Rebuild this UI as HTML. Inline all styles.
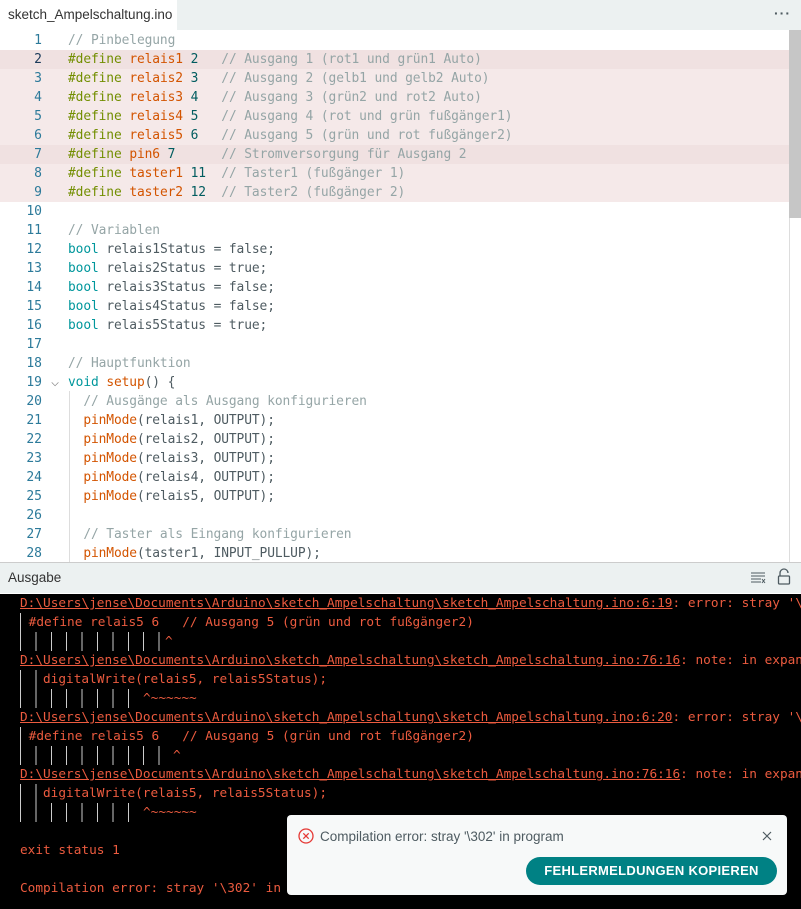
<!DOCTYPE html>
<html><head><meta charset="utf-8"><style>
*{margin:0;padding:0;box-sizing:border-box}
body{width:801px;height:909px;overflow:hidden;background:#fff;font-family:"Liberation Sans",sans-serif;position:relative}
.tabbar{position:absolute;left:0;top:0;width:801px;height:30px;background:#ecf1f1}
.tab{position:absolute;left:0;top:0;width:177px;height:30px;background:#fff;font-size:13.5px;color:#333;padding:7px 0 0 8px}
.dots{position:absolute;right:10px;top:5px;color:#4e5b61;font-size:14px;letter-spacing:1px;font-weight:bold}
.code{position:absolute;left:0;top:31px;width:789px;height:531px;overflow:hidden}
.ln{height:19px;line-height:19px;font-family:"DejaVu Sans Mono",monospace;font-size:13.5px;white-space:pre;color:#4e5b61;position:relative}
.ln .n{display:inline-block;width:42px;text-align:right;color:#2c7a9a;margin-right:26px;font-size:13px}
.tx{font-size:12.9px;letter-spacing:-0.1px}
.hl{background:#f5e9e9}.hl2{background:#f0e1e1}
.c{color:#95a5a6}.d{color:#728e00}.o{color:#d35400}.t{color:#00979c}.k{color:#005c5f}
.sb{position:absolute;left:789px;top:30px;width:12px;height:532px;background:#fff;border-left:1px solid #ddd}
.thumb{position:absolute;left:789px;top:30px;width:12px;height:188px;background:#c6c6c6}
.guide{position:absolute;left:69px;top:391px;width:1px;height:171px;background:#ddd}
.ohead{position:absolute;left:0;top:562px;width:801px;height:31px;background:#ecf1f1;border-top:1px solid #ccc;font-size:13.5px;color:#333;padding:7px 0 0 8px}
.out{position:absolute;left:0;top:594px;width:801px;height:315px;background:#000;overflow:hidden}
.ol{position:absolute;left:20px;height:19px;line-height:19px;font-family:"DejaVu Sans Mono",monospace;font-size:12.75px;color:#ec5b3f;white-space:pre}
.u{text-decoration:underline}
.bars{position:absolute;height:19px;background:repeating-linear-gradient(to right,#ccc 0 1px,transparent 1px 15.4px)}
.toast{position:absolute;left:287px;top:815px;width:500px;height:80px;background:#f7f9f9;border-radius:4px}
.btn{position:absolute;left:239px;top:42px;width:251px;height:28px;border-radius:14px;background:#008184;color:#fff;font-weight:bold;font-size:13px;text-align:center;line-height:28px;letter-spacing:.3px}
</style></head><body>
<div class="tabbar"><div class="tab">sketch_Ampelschaltung.ino</div><div class="dots">···</div></div>
<div class="code">
<div class="ln"><span class="n">1</span><span class="tx"><span class="c">// Pinbelegung</span></span></div>
<div class="ln hl2"><span class="n" style="color:#1a3a5a">2</span><span class="tx"><span class="d">#define</span> <span class="o">relais1</span> <span class="k">2</span>   <span class="c">// Ausgang 1 (rot1 und grün1 Auto)</span></span></div>
<div class="ln hl"><span class="n">3</span><span class="tx"><span class="d">#define</span> <span class="o">relais2</span> <span class="k">3</span>   <span class="c">// Ausgang 2 (gelb1 und gelb2 Auto)</span></span></div>
<div class="ln hl"><span class="n">4</span><span class="tx"><span class="d">#define</span> <span class="o">relais3</span> <span class="k">4</span>   <span class="c">// Ausgang 3 (grün2 und rot2 Auto)</span></span></div>
<div class="ln hl"><span class="n">5</span><span class="tx"><span class="d">#define</span> <span class="o">relais4</span> <span class="k">5</span>   <span class="c">// Ausgang 4 (rot und grün fußgänger1)</span></span></div>
<div class="ln hl"><span class="n">6</span><span class="tx"><span class="d">#define</span> <span class="o">relais5</span> <span class="k">6</span>   <span class="c">// Ausgang 5 (grün und rot fußgänger2)</span></span></div>
<div class="ln hl2"><span class="n">7</span><span class="tx"><span class="d">#define</span> <span class="o">pin6</span> <span class="k">7</span>      <span class="c">// Stromversorgung für Ausgang 2</span></span></div>
<div class="ln hl"><span class="n">8</span><span class="tx"><span class="d">#define</span> <span class="o">taster1</span> <span class="k">11</span>  <span class="c">// Taster1 (fußgänger 1)</span></span></div>
<div class="ln hl"><span class="n">9</span><span class="tx"><span class="d">#define</span> <span class="o">taster2</span> <span class="k">12</span>  <span class="c">// Taster2 (fußgänger 2)</span></span></div>
<div class="ln"><span class="n">10</span></div>
<div class="ln"><span class="n">11</span><span class="tx"><span class="c">// Variablen</span></span></div>
<div class="ln"><span class="n">12</span><span class="tx"><span class="t">bool</span> relais1Status = false;</span></div>
<div class="ln"><span class="n">13</span><span class="tx"><span class="t">bool</span> relais2Status = true;</span></div>
<div class="ln"><span class="n">14</span><span class="tx"><span class="t">bool</span> relais3Status = false;</span></div>
<div class="ln"><span class="n">15</span><span class="tx"><span class="t">bool</span> relais4Status = false;</span></div>
<div class="ln"><span class="n">16</span><span class="tx"><span class="t">bool</span> relais5Status = true;</span></div>
<div class="ln"><span class="n">17</span></div>
<div class="ln"><span class="n">18</span><span class="tx"><span class="c">// Hauptfunktion</span></span></div>
<div class="ln"><span class="n">19</span><span class="tx"><span class="t">void</span> <span class="o">setup</span>() {</span><span style="position:absolute;left:51px;top:0;color:#888">⌵</span></div>
<div class="ln"><span class="n">20</span><span class="tx">  <span class="c">// Ausgänge als Ausgang konfigurieren</span></span></div>
<div class="ln"><span class="n">21</span><span class="tx">  <span class="o">pinMode</span>(relais1, OUTPUT);</span></div>
<div class="ln"><span class="n">22</span><span class="tx">  <span class="o">pinMode</span>(relais2, OUTPUT);</span></div>
<div class="ln"><span class="n">23</span><span class="tx">  <span class="o">pinMode</span>(relais3, OUTPUT);</span></div>
<div class="ln"><span class="n">24</span><span class="tx">  <span class="o">pinMode</span>(relais4, OUTPUT);</span></div>
<div class="ln"><span class="n">25</span><span class="tx">  <span class="o">pinMode</span>(relais5, OUTPUT);</span></div>
<div class="ln"><span class="n">26</span></div>
<div class="ln"><span class="n">27</span><span class="tx">  <span class="c">// Taster als Eingang konfigurieren</span></span></div>
<div class="ln"><span class="n">28</span><span class="tx">  <span class="o">pinMode</span>(taster1, INPUT_PULLUP);</span></div>
</div>
<div class="guide"></div>
<div class="sb"></div><div class="thumb"></div>
<div class="ohead">Ausgabe
<svg style="position:absolute;left:751px;top:9px" width="15" height="12" viewBox="0 0 15 12"><path d="M0 1h14M0 4h14M0 7h10M0 10h10M11 7l3 4M14 7l-3 4" stroke="#4e5b61" stroke-width="1" fill="none"/></svg>
<svg style="position:absolute;left:777px;top:5px" width="14" height="17" viewBox="0 0 14 17"><path d="M3 8V5a4 4 0 0 1 8 0" stroke="#4e5b61" fill="none" stroke-width="1.3"/><rect x="1.5" y="8" width="11" height="8" rx="1" stroke="#4e5b61" fill="none" stroke-width="1.3"/></svg>
</div>
<div class="out">
<div class="ol" style="top:0"><span class="u">D:\Users\jense\Documents\Arduino\sketch_Ampelschaltung\sketch_Ampelschaltung.ino:6:19</span>: error: stray '\302' in program</div>
<div class="ol" style="top:19px;border-left:1px solid #ccc"> #define relais5 6   // Ausgang 5 (grün und rot fußgänger2)</div>
<div class="bars" style="left:20px;top:38px;width:140px"></div><div class="ol" style="top:38px;left:165px">^</div>
<div class="ol" style="top:57px"><span class="u">D:\Users\jense\Documents\Arduino\sketch_Ampelschaltung\sketch_Ampelschaltung.ino:76:16</span>: note: in expansion of macro 'relais5'</div>
<div class="bars" style="left:20px;top:76px;width:20px"></div><div class="ol" style="top:76px;left:43px">digitalWrite(relais5, relais5Status);</div>
<div class="bars" style="left:20px;top:95px;width:112px"></div><div class="ol" style="top:95px;left:143px">^~~~~~~</div>
<div class="ol" style="top:114px"><span class="u">D:\Users\jense\Documents\Arduino\sketch_Ampelschaltung\sketch_Ampelschaltung.ino:6:20</span>: error: stray '\302' in program</div>
<div class="ol" style="top:133px;border-left:1px solid #ccc"> #define relais5 6   // Ausgang 5 (grün und rot fußgänger2)</div>
<div class="bars" style="left:20px;top:152px;width:140px"></div><div class="ol" style="top:152px;left:173px">^</div>
<div class="ol" style="top:171px"><span class="u">D:\Users\jense\Documents\Arduino\sketch_Ampelschaltung\sketch_Ampelschaltung.ino:76:16</span>: note: in expansion of macro 'relais5'</div>
<div class="bars" style="left:20px;top:190px;width:20px"></div><div class="ol" style="top:190px;left:43px">digitalWrite(relais5, relais5Status);</div>
<div class="bars" style="left:20px;top:209px;width:112px"></div><div class="ol" style="top:209px;left:143px">^~~~~~~</div>
<div class="ol" style="top:247px">exit status 1</div>
<div class="ol" style="top:285px">Compilation error: stray '\302' in program</div>
</div>
<div class="toast">
<svg style="position:absolute;left:11px;top:13px" width="16" height="16" viewBox="0 0 16 16"><circle cx="8" cy="8" r="7" stroke="#e53935" stroke-width="1.3" fill="none"/><path d="M5.3 5.3l5.4 5.4M10.7 5.3l-5.4 5.4" stroke="#e53935" stroke-width="1.3"/></svg>
<div style="position:absolute;left:33px;top:14px;font-size:13.5px;color:#4e5b61">Compilation error: stray '\302' in program</div>
<svg style="position:absolute;left:475px;top:16px" width="10" height="10" viewBox="0 0 10 10"><path d="M1 1l8 8M9 1l-8 8" stroke="#4e5b61" stroke-width="1.2"/></svg>
<div class="btn">FEHLERMELDUNGEN KOPIEREN</div>
</div>
</body></html>
